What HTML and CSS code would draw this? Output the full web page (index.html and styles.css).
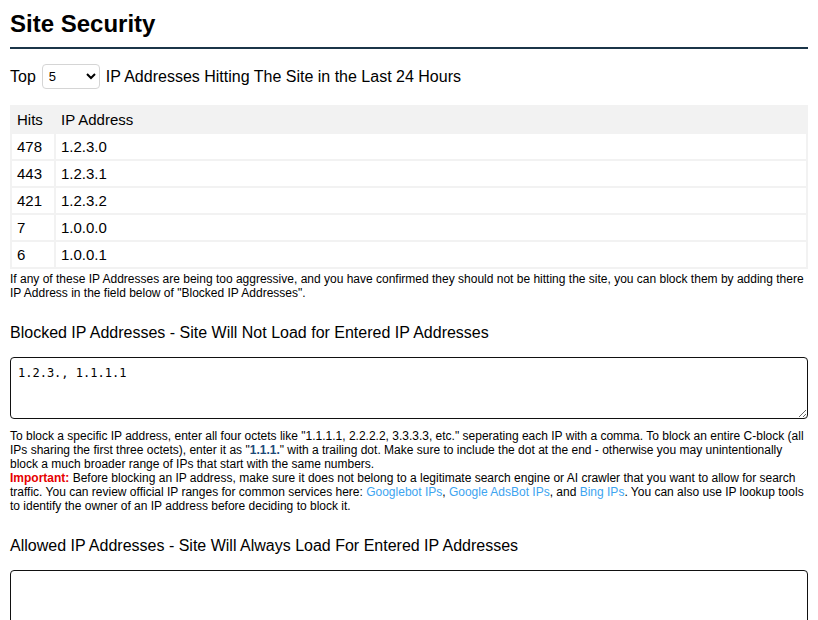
FILE: index.html
```html
<!DOCTYPE html>
<html lang="en">
<head>
    <meta charset="UTF-8">
    <meta name="viewport" content="width=device-width, initial-scale=1.0">
    <title>Site Security</title>
    <link rel="stylesheet" href="styles.css">
</head>
<body>
    <div class="wrap">
        <h1 class="title">Site Security</h1>

        <div class="top-row">
            <span>Top</span>
            <select class="top-select">
                <option>5</option>
                <option>10</option>
                <option>25</option>
            </select>
            <span>IP Addresses Hitting The Site in the Last 24 Hours</span>
        </div>

        <table class="hits">
            <thead>
                <tr><th class="col-hits">Hits</th><th>IP Address</th></tr>
            </thead>
            <tbody>
                <tr><td>478</td><td>1.2.3.0</td></tr>
                <tr><td>443</td><td>1.2.3.1</td></tr>
                <tr><td>421</td><td>1.2.3.2</td></tr>
                <tr><td>7</td><td>1.0.0.0</td></tr>
                <tr><td>6</td><td>1.0.0.1</td></tr>
            </tbody>
        </table>
        <p class="note">If any of these IP Addresses are being too aggressive, and you have confirmed they should not be hitting the site, you can block them by adding there IP Address in the field below of "Blocked IP Addresses".</p>

        <h2 class="label">Blocked IP Addresses - Site Will Not Load for Entered IP Addresses</h2>
        <textarea class="ip-box">1.2.3., 1.1.1.1</textarea>
        <p class="note help">To block a specific IP address, enter all four octets like "1.1.1.1, 2.2.2.2, 3.3.3.3, etc." seperating each IP with a comma. To block an entire C-block (all IPs sharing the first three octets), enter it as "<b class="ex">1.1.1.</b>" with a trailing dot. Make sure to include the dot at the end - otherwise you may unintentionally block a much broader range of IPs that start with the same numbers.<br>
        <strong class="warn">Important:</strong> Before blocking an IP address, make sure it does not belong to a legitimate search engine or AI crawler that you want to allow for search traffic. You can review official IP ranges for common services here: <a href="#">Googlebot IPs</a>, <a href="#">Google AdsBot IPs</a>, and <a href="#">Bing IPs</a>. You can also use IP lookup tools to identify the owner of an IP address before deciding to block it.</p>

        <h2 class="label">Allowed IP Addresses - Site Will Always Load For Entered IP Addresses</h2>
        <textarea class="ip-box"></textarea>
    </div>
</body>
</html>
```

FILE: styles.css
```css
* {
    box-sizing: border-box;
}
body {
    margin: 0;
    font-family: "Liberation Sans", Arial, sans-serif;
    color: #000;
}
.wrap {
    padding: 0 10px;
}
.title {
    margin: 0;
    padding: 10px 0 9px;
    font-size: 24px;
    line-height: 28px;
    font-weight: bold;
    border-bottom: 2px solid #1b3548;
}
.top-row {
    display: flex;
    align-items: center;
    gap: 6px;
    margin-top: 15px;
    font-size: 16px;
    height: 25px;
}
.top-select {
    width: 58px;
    height: 25px;
    font-family: "Liberation Sans", Arial, sans-serif;
    font-size: 13px;
    border: 1px solid #d5d5d5;
    border-radius: 4px;
    background: #fff;
    padding: 0 2px;
    margin: 0;
}
.hits {
    width: 100%;
    margin-top: 16px;
    border-collapse: collapse;
    font-size: 15px;
}
.hits th {
    background: #f2f2f2;
    font-weight: normal;
    text-align: left;
    height: 27px;
    padding: 0 5px;
    border: 2px solid #f2f2f2;
}
.hits td {
    height: 27px;
    padding: 0 5px;
    border: 2px solid #f2f2f2;
}
.hits .col-hits {
    width: 44px;
}
.note {
    margin: 3px 0 0;
    font-size: 12px;
    line-height: 14px;
}
.label {
    margin: 23px 0 0;
    font-size: 16px;
    font-weight: normal;
    line-height: 20px;
}
.ip-box {
    display: block;
    width: 100%;
    height: 62px;
    margin-top: 14px;
    padding: 8px 7px;
    border: 1px solid #111;
    border-radius: 4px;
    font-family: "DejaVu Sans Mono", monospace;
    font-size: 12px;
    resize: vertical;
}
.help {
    margin-top: 10px;
}
.warn {
    color: #e60000;
}
.ex {
    color: #1d4a78;
}
.help a {
    color: #3da4f0;
    text-decoration: none;
}
```
